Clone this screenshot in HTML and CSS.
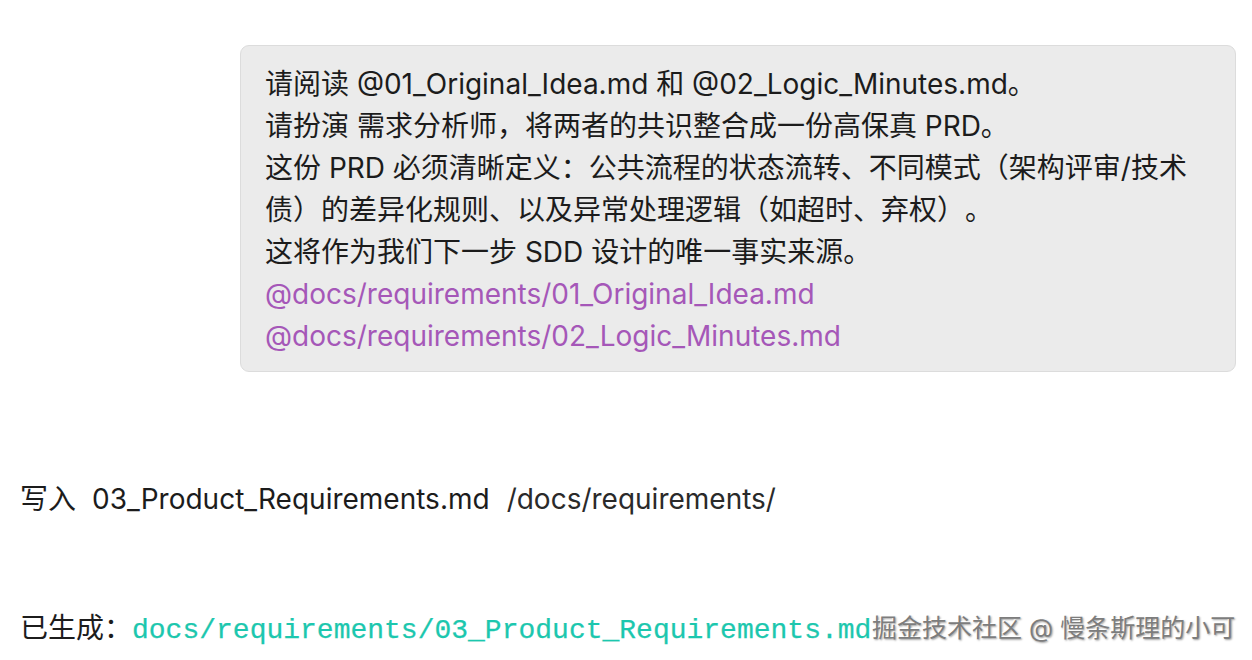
FILE: index.html
```html
<!DOCTYPE html>
<html lang="zh">
<head>
    <meta charset="UTF-8">
    <title>PRD</title>
    <link rel="stylesheet" href="styles.css">
</head>
<body>
<div class="chat">
    <div class="bubble">
        <p>请阅读 @01_Original_Idea.md 和 @02_Logic_Minutes.md。</p>
        <p>请扮演 需求分析师，将两者的共识整合成一份高保真 PRD。</p>
        <p>这份 PRD 必须清晰定义：公共流程的状态流转、不同模式（架构评审/技术债）的差异化规则、以及异常处理逻辑（如超时、弃权）。</p>
        <p>这将作为我们下一步 SDD 设计的唯一事实来源。</p>
        <p class="ref">@docs/requirements/01_Original_Idea.md</p>
        <p class="ref">@docs/requirements/02_Logic_Minutes.md</p>
    </div>
</div>
<div class="write-row">
    <span class="label">写入</span>
    <span class="file">03_Product_Requirements.md</span>
    <span class="dir">/docs/requirements/</span>
</div>
<div class="done-row">
    <span class="label">已生成：</span><code class="path">docs/requirements/03_Product_Requirements.md</code>
</div>
<span class="watermark">掘金技术社区 @ 慢条斯理的小可</span>
</body>
</html>
```

FILE: styles.css
```css
* {
    margin: 0;
    padding: 0;
}

body {
    width: 1252px;
    height: 660px;
    overflow: hidden;
    background: #fff;
    color: #1c1c1c;
    font-family: Inter, "Noto Sans CJK SC", sans-serif;
    font-size: 28px;
    text-spacing-trim: space-all;
    position: relative;
}

.chat {
    display: flex;
    justify-content: flex-end;
    padding: 45px 16px 0 240px;
}

.bubble {
    flex: 1;
    background: #ebebeb;
    border: 1px solid #dcdcdc;
    border-radius: 9px;
    padding: 17px 30px 14px 24px;
    line-height: 42px;
}

.bubble .ref {
    color: #a557b8;
}

.write-row {
    margin-top: 106px;
    padding-left: 20px;
    line-height: 42px;
    display: flex;
}

.write-row .file {
    margin-left: 16px;
}

.write-row .dir {
    margin-left: 17px;
    color: #2a2a2a;
}

.done-row {
    margin-top: 87px;
    padding-left: 20px;
    line-height: 42px;
    white-space: nowrap;
}

.done-row .path {
    font-family: "Liberation Mono", monospace;
    font-size: 28px;
    color: #1cc7ae;
    -webkit-text-stroke: 0.25px #1cc7ae;
}

.watermark {
    position: absolute;
    left: 872px;
    top: 608px;
    line-height: 40px;
    font-size: 25px;
    color: #7d7d7d;
    white-space: nowrap;
    text-shadow: -1px -1px 1px #fff, 1px 1px 2px rgba(0, 0, 0, 0.4);
}
```
